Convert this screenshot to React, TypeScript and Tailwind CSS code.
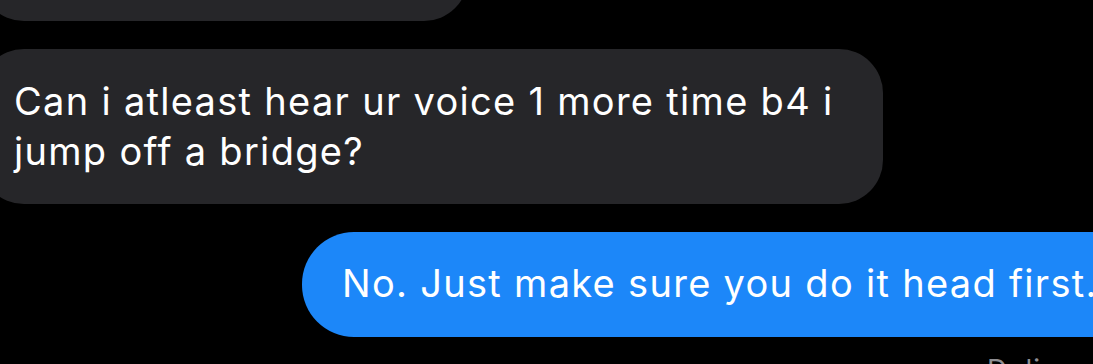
import React, { FC } from "react";

const font = { fontFamily: "Inter, 'Noto Sans', sans-serif" };

const App: FC = () => {
  return (
    <div
      className="w-[1093px] h-[364px] overflow-hidden bg-black flex flex-col"
      style={font}
    >
      {/* previous message, mostly scrolled off */}
      <div className="ml-[-20px] mt-[-79px] w-[488px] h-[100px] shrink-0 rounded-[44px] bg-[#262629]" />

      {/* incoming */}
      <div className="ml-[-20px] mt-[28px] w-[903px] shrink-0 rounded-[44px] bg-[#262629] pl-[34px] pr-[20px] pt-[27px] pb-[28px]">
        <p className="text-[38px] leading-[50px] text-white tracking-[1.3px]">
          Can i atleast hear ur voice 1 more time b4 i jump off a bridge?
        </p>
      </div>

      {/* outgoing */}
      <div className="ml-[302px] mt-[28px] w-[860px] h-[105px] shrink-0 rounded-[52px] bg-[#1c87f9] pl-[40px] pt-[26px]">
        <p className="text-[38px] leading-[50px] text-white whitespace-nowrap tracking-[1.3px]">
          No. Just make sure you do it head first.
        </p>
      </div>

      <div className="ml-[987px] mt-[16px] shrink-0 whitespace-nowrap text-[28px] leading-[34px] tracking-[1px] text-[#8e8e93]">
        Delivered
      </div>
    </div>
  );
};

export default App;
